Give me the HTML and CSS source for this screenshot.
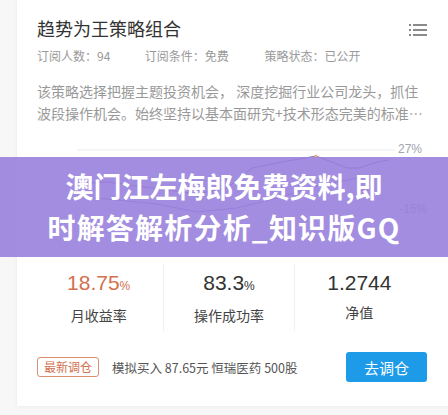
FILE: index.html
```html
<!DOCTYPE html>
<html lang="zh-CN">
<head>
    <meta charset="UTF-8">
    <meta name="viewport" content="width=device-width, initial-scale=1.0">
    <title>趋势为王策略组合</title>
    <link rel="stylesheet" href="styles.css">
</head>
<body>
    <div class="card">
        <div class="head">
            <h1>趋势为王策略组合</h1>
            <svg class="menu" width="18" height="14" viewBox="0 0 18 14">
                <g fill="#8a8a8a">
                    <rect x="0" y="1" width="2" height="2"/>
                    <rect x="4" y="1" width="14" height="2"/>
                    <rect x="0" y="6" width="2" height="2"/>
                    <rect x="4" y="6" width="14" height="2"/>
                    <rect x="0" y="11" width="2" height="2"/>
                    <rect x="4" y="11" width="14" height="2"/>
                </g>
            </svg>
        </div>
        <div class="meta">
            <span class="m1">订阅人数：94</span>
            <span class="m2">订阅条件：免费</span>
            <span>策略状态：已公开</span>
        </div>
        <p class="desc">该策略选择把握主题投资机会， 深度挖掘行业公司龙头，抓住波段操作机会。始终坚持以基本面研究+技术形态完美的标准…</p>

        <div class="chart">
            <svg width="390" height="110" viewBox="0 0 390 110">
                <line x1="40" y1="12" x2="358" y2="12" stroke="#e8ecf0"/>
                <line x1="40" y1="42" x2="358" y2="42" stroke="#eef0f3"/>
                <line x1="40" y1="72" x2="358" y2="72" stroke="#e8ecf0"/>
                <polyline fill="none" stroke="#8a6fb0" stroke-width="1"
                    points="40,46 70,44 100,48 130,52 160,56 190,50 215,30 245,24 268,20 279,18 295,24 310,30 322,30 340,24 352,22"/>
                <polyline fill="none" stroke="#9b86c7" stroke-width="1"
                    points="40,58 80,62 120,66 160,74 200,70 240,60 280,48 320,40"/>
                <circle cx="279" cy="18" r="1.5" fill="#f0b070"/>
                <text x="361" y="15" class="axis">27%</text>
                <text x="362" y="75" class="axis">-15%</text>
            </svg>
        </div>

        <div class="stats">
            <div class="stat">
                <div class="val up">18.75<small>%</small></div>
                <div class="lbl">月收益率</div>
            </div>
            <div class="stat">
                <div class="val">83.3<small>%</small></div>
                <div class="lbl">操作成功率</div>
            </div>
            <div class="stat">
                <div class="val">1.2744</div>
                <div class="lbl">净值</div>
            </div>
        </div>

        <div class="trade">
            <span class="tag">最新调仓</span>
            <span class="info">模拟买入 87.65元 恒瑞医药 500股</span>
            <button class="go">去调仓</button>
        </div>
    </div>

    <div class="banner">
        <p>澳门江左梅郎免费资料,即<br><span class="wide">时解答解析分析_知识版GQ</span></p>
    </div>
</body>
</html>
```

FILE: styles.css
```css
body {
    margin: 0;
    background-color: #f7f7f7;
    font-family: "Noto Sans CJK SC", "Noto Sans", sans-serif;
    width: 448px;
    height: 415px;
    overflow: hidden;
    position: relative;
}
.card {
    background: #fff;
    margin-left: 17px;
    width: 450px;
    height: 406px;
    box-shadow: 0 0 4px rgba(0,0,0,0.06);
    padding: 14px 0 0 20px;
    box-sizing: border-box;
}
.head {
    display: flex;
    align-items: center;
    width: 390px;
    justify-content: space-between;
}
h1 {
    margin: 0;
    font-size: 18px;
    font-weight: normal;
    color: #333;
    line-height: 28px;
}
.menu {
    margin-top: 4px;
}
.meta {
    margin-top: 5px;
    font-size: 12px;
    color: #999;
    line-height: 18px;
}
.meta span {
    display: inline-block;
}
.m1 {
    width: 105px;
}
.m2 {
    width: 117px;
}
.desc {
    margin: 15px 0 0;
    width: 392px;
    font-size: 14px;
    line-height: 22px;
    color: #999;
}
.chart {
    margin-top: 14px;
    height: 126px;
}
.axis {
    font-family: "Liberation Sans", sans-serif;
    font-size: 12px;
    fill: #a0a4ab;
}
.stats {
    display: flex;
    width: 390px;
    margin-left: -20px;
    padding-left: 17px;
}
.stat {
    flex: 1;
    text-align: center;
    border-left: 1px solid #f0f0f0;
    padding: 4px 0 4px;
}
.stat:first-child {
    border-left: none;
}
.val {
    font-family: "Liberation Sans", sans-serif;
    font-size: 21px;
    color: #333;
    line-height: 30px;
}
.val small {
    font-size: 12px;
}
.val.up {
    color: #d2704e;
}
.lbl {
    font-size: 14px;
    color: #444;
    line-height: 24px;
    margin-top: 2px;
}
.trade {
    display: flex;
    align-items: center;
    width: 390px;
    margin-top: 21px;
}
.tag {
    font-size: 12px;
    color: #d2704e;
    border: 1px solid #d9906f;
    border-radius: 3px;
    padding: 0 6px;
    line-height: 18px;
}
.info {
    margin-left: 13px;
    font-size: 12.5px;
    color: #555;
    flex: 1;
}
.go {
    width: 81px;
    height: 30px;
    background-color: #1e9be8;
    border: none;
    border-radius: 3px;
    color: #fff;
    font-size: 15px;
    font-family: "Noto Sans CJK SC", sans-serif;
}
.banner {
    position: absolute;
    left: 0;
    right: 0;
    top: 157px;
    height: 100px;
    background: rgba(150, 125, 220, 0.88);
    display: flex;
    align-items: center;
    justify-content: center;
}
.banner p {
    margin: 0;
    color: #fff;
    font-weight: bold;
    font-size: 28px;
    line-height: 41px;
    text-align: center;
}
.wide {
    letter-spacing: 1.2px;
}
```
